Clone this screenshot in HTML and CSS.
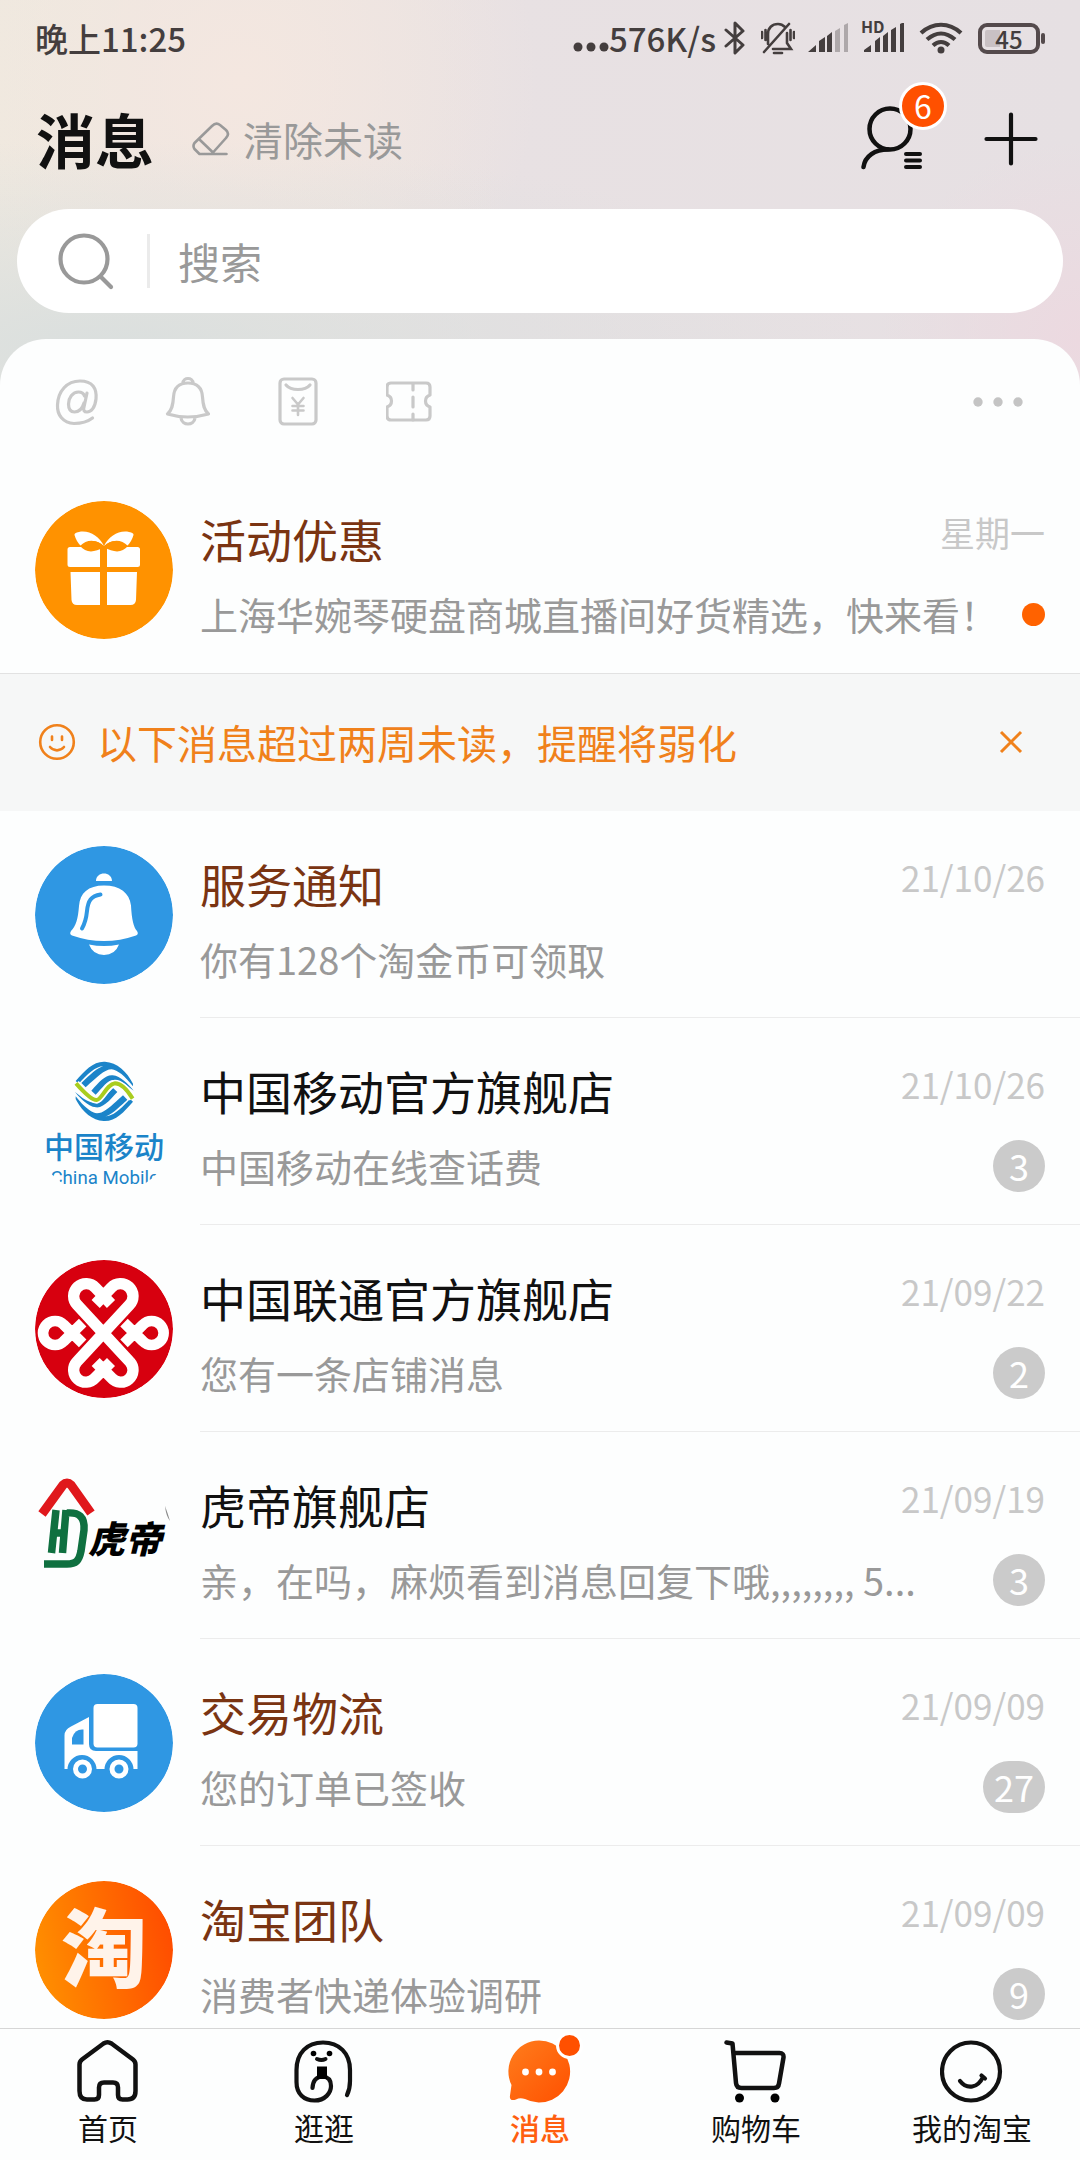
FILE: index.html
```html
<!DOCTYPE html>
<html lang="zh-CN">
<head>
<meta charset="utf-8">
<meta name="viewport" content="width=device-width, initial-scale=1">
<title>消息</title>
<link rel="stylesheet" href="styles.css">
</head>
<body>
<div class="app">
  <div class="status">
    <span class="clock">晚上11:25</span>
    <div class="status-right">
      <svg width="36" height="32" viewBox="0 0 36 32"><g fill="#443e3e"><circle cx="5" cy="25" r="4.5"/><circle cx="18" cy="25" r="4.5"/><circle cx="31" cy="25" r="4.5"/></g></svg>
      <span class="speed">576K/s</span>
      <svg class="bt" width="22" height="34" viewBox="0 0 22 34"><path d="M2 9 19 24 11 32V2l8 8L2 25" fill="none" stroke="#443e3e" stroke-width="3" stroke-linejoin="round" stroke-linecap="round"/></svg>
      <svg class="mute" width="34" height="34" viewBox="0 0 34 34"><g fill="none" stroke="#443e3e" stroke-width="2.6" stroke-linecap="round"><path d="M3 31 28 3M7 23V13c0-6 4-10 10-10 3 0 5 1 7 3M26 12v10l4 6H12M1 11v6M4.500 9v10M33 11v6M29.500 9v10"/><path d="M13 32h8"/></g></svg>
      <svg class="signal" width="42" height="30" viewBox="0 0 42 30"><g fill="#443e3e"><path d="M0 29 8 22v7zM11 18l6-4v15h-6zM19 13l5-4v20h-5z"/><g opacity=".35"><path d="M27 8l5-3v24h-5zM36 2l4-2v29h-4z"/></g></g></svg>
      <div class="hd-signal">
        <svg width="42" height="30" viewBox="0 0 42 30"><path fill="#443e3e" d="M0 29v-2l7-5v7zM11 18l5-4v15h-5zM19 13l5-4v20h-5zM27 7l5-3v25h-5zM36 1l4-2v30h-4z"/></svg>
        <span class="hd">HD</span>
      </div>
      <svg class="wifi" width="44" height="32" viewBox="0 0 44 32"><g fill="none" stroke="#443e3e" stroke-width="4.200"><path d="M2 11c12-11 28-11 40 0M8 17.500c9-8 19-8 28 0M14 23.500c5-4.500 11-4.500 16 0"/></g><circle cx="22" cy="28" r="3.500" fill="#443e3e"/></svg>
      <div class="battery"><span>45</span></div>
    </div>
  </div>

  <header class="header">
    <h1>消息</h1>
    <button class="clear" type="button">
      <svg width="38" height="36" viewBox="0 0 38 36"><g fill="none" stroke="#999" stroke-width="2.600" stroke-linecap="round" stroke-linejoin="round"><path d="M2.500 22 20 5q4-4 8-1l6 5q4 4 0 8L21 31.500 8 19M2.500 22q-2 3 0 6l5 5h27"/></g></svg>
      清除未读
    </button>
    <div class="actions">
      <button class="contacts" type="button" aria-label="通讯录">
        <svg width="62" height="66" viewBox="0 0 62 66"><g fill="none" stroke="#111" stroke-width="4.500" stroke-linecap="round"><circle cx="29" cy="23" r="20.500"/><path d="M2.500 61C4 50 14 43.500 27 43.500"/></g><path d="M45 48h14M45 54.500h14M45 61h14" stroke="#111" stroke-width="4" stroke-linecap="round"/></svg>
        <span class="count">6</span>
      </button>
      <button type="button" aria-label="添加">
        <svg width="54" height="54" viewBox="0 0 54 54"><path d="M27 2.500v49M2.500 27h49" stroke="#111" stroke-width="4.200" stroke-linecap="round"/></svg>
      </button>
    </div>
  </header>

  <form class="search">
    <svg width="58" height="58" viewBox="0 0 58 58"><g fill="none" stroke="#999" stroke-width="4.200" stroke-linecap="round"><circle cx="27" cy="27" r="23.500"/><path d="M44 45 54 55"/></g></svg>
    <input type="search" placeholder="搜索" aria-label="搜索">
  </form>

  <main class="panel">
    <div class="filters">
      <button type="button" aria-label="@我"><svg width="48" height="52" viewBox="0 0 48 52"><g fill="none" stroke="#c9c9c9" stroke-width="3.200" stroke-linecap="round" stroke-linejoin="round"><path d="M39.500 42C33 47 27 47.500 21 47.500 10 47 4 39 4.500 29 5 15 14 5 27 5s17 8 16 18c-1 9-5 13-9 13-3 0-4-2-3-5l3-14M31.500 20c-1-3-3-4-6-4-6 0-10 6-10 12 0 5 2 8 6 8 5 0 8-4 9.500-9"/></g></svg></button>
      <button type="button" aria-label="通知"><svg width="48" height="52" viewBox="0 0 48 52"><g fill="none" stroke="#c9c9c9" stroke-width="3.200" stroke-linecap="round" stroke-linejoin="round"><path d="M24 7C15 7 10 12 9.500 21 9 29 8 34 3.500 38q20 6 41 0C40 34 39 29 38.500 21 38 12 33 7 24 7zM19 7c0-6 10-6 10 0M17 42c1 8 13 8 14 0"/></g></svg></button>
      <button type="button" aria-label="红包"><svg width="48" height="52" viewBox="0 0 48 52"><g fill="none" stroke="#c9c9c9" stroke-width="3.200" stroke-linecap="round" stroke-linejoin="round"><rect x="5" y="3" width="36" height="45" rx="4"/><path d="M11 9c5 6 19 6 24 0"/><path d="M17.500 22 23 28.500 28.500 22M23 28.500V39M17.500 30h11M17.500 34.500h11" stroke-width="2.600"/></g></svg></button>
      <button type="button" aria-label="优惠券"><svg width="48" height="52" viewBox="0 0 48 52"><g fill="none" stroke="#c9c9c9" stroke-width="3.200" stroke-linecap="round" stroke-linejoin="round"><path d="M5 7h35q4 0 4 4v8c-6 2-6 10 0 12v9q0 4-4 4H5q-4 0-4-4v-9c6-2 6-10 0-12v-8q0-4 4-4z"/><path d="M27 8v6M27 21v10M27 38v6"/></g></svg></button>
      <button class="more" type="button" aria-label="更多"><svg width="52" height="12" viewBox="0 0 52 12"><g fill="#c4c4c4"><circle cx="6" cy="6" r="4.700"/><circle cx="26" cy="6" r="4.700"/><circle cx="46" cy="6" r="4.700"/></g></svg></button>
    </div>

    <ul class="list">
      <li class="row">
        <svg class="avatar" viewBox="0 0 138 138"><circle cx="69" cy="69" r="69" fill="#ff9200"/><g fill="#fff"><path d="M35 46h30v20H35q-2.500 0-2.500-2.500v-15q0-2.500 2.500-2.500zM72 46h30.500q2.500 0 2.500 2.500v15q0 2.500-2.500 2.500H72zM35.500 71H65v33H42q-5 0-5.500-5zM72 71h30l-1 28q-.5 5-5.500 5H72z"/><path d="M69 45C64 35 54 29 44 31q-5 1-4.500 3 2 7 6.500 11 12-10 23 0zM69 45c5-10 15-16 25-14q5 1 4.500 3-2 7-6.500 11-12-10-23 0z"/></g><path d="M69 46c-10 6-18 6-24-1 7-7 17-7 24 1zM69 46c10 6 18 6 24-1-7-7-17-7-24 1z" fill="#ff9200"/></svg>
        <div class="body">
          <div class="line"><h2 class="official">活动优惠</h2><time>星期一</time></div>
          <div class="line"><p>上海华婉琴硬盘商城直播间好货精选，快来看！</p><span class="dot"></span></div>
        </div>
      </li>
    </ul>

    <div class="notice">
      <svg width="38" height="38" viewBox="0 0 38 38"><g fill="none" stroke="#f0811b" stroke-width="2.600" stroke-linecap="round"><circle cx="19" cy="19" r="16.800"/><path d="M14 13.500v3.500M24 13.500v3.500M12 24c4 4.500 10 4.500 14 0"/></g></svg>
      <span>以下消息超过两周未读，提醒将弱化</span>
      <button type="button" aria-label="关闭"><svg width="24" height="24" viewBox="0 0 24 24"><path d="M2 2 22 22M22 2 2 22" stroke="#f0811b" stroke-width="3"/></svg></button>
    </div>

    <ul class="list">
      <li class="row">
        <svg class="avatar" viewBox="0 0 138 138"><circle cx="69" cy="69" r="69" fill="#2f97e3"/><g fill="#fff"><path d="M61 35c0-10 16-10 16 0zM54 98.500q15 3 30 0-4 10.500-15 10.500T54 98.500z"/><path d="M69 39.500C53 39.500 45 47 44 60 43 73 41 80 36 85q-2 3 1 4.500 32 11 64 0 3-1.500 1-4.500-5-5-6-25.500C94.500 47 85 39.500 69 39.500z"/></g><path d="M65.500 48.500C56 50 53 55 52 65s-3 14-5 17.500" fill="none" stroke="#2f97e3" stroke-width="4" stroke-linecap="round"/></svg>
        <div class="body">
          <div class="line"><h2 class="official">服务通知</h2><time>21/10/26</time></div>
          <div class="line"><p>你有128个淘金币可领取</p></div>
        </div>
      </li>
      <li class="row">
        <svg class="avatar lettered" viewBox="15 6 414 414"><defs><clipPath id="disc"><circle cx="222" cy="213" r="222"/></clipPath><g id="wave"><path fill="#1b84c9" d="M137 90C165 58 190 30 225 32c36 2 66 30 84 66v8C285 76 262 56 245 55c-22 0-44 24-78 54l-13-13c28-26 48-46 66-50-24 0-48 24-74 52z"/><path fill="#1b84c9" d="M184 119c24-26 42-48 64-46 24 2 46 26 63 46-22-18-42-34-62-32-18 2-30 22-52 44z"/></g><path id="stream" d="M138 97C160 122 185 148 200 147c16-2 30-48 55-50 20 0 38 22 53 46" fill="none"/></defs><use href="#wave"/><use href="#wave" transform="rotate(180 223 121)"/><use href="#stream" stroke="#fff" stroke-width="22"/><use href="#stream" stroke="#a9cd1e" stroke-width="12"/><g fill="#1b84c9"><text class="cm-cn" x="222" y="320" text-anchor="middle">中国移动</text><g clip-path="url(#disc)"><text class="cm-en" x="224" y="398" text-anchor="middle">China Mobile</text></g></g></svg>
        <div class="body">
          <div class="line"><h2>中国移动官方旗舰店</h2><time>21/10/26</time></div>
          <div class="line"><p>中国移动在线查话费</p><span class="badge">3</span></div>
        </div>
      </li>
      <li class="row">
        <svg class="avatar" viewBox="15 12 414 414"><circle cx="222" cy="219" r="207" fill="#d7000f"/><g fill="none" stroke="#fff" stroke-width="32"><path d="M158 262 101 206A36 36 0 1 0 101 256L158 200M282 262 339 206A36 36 0 1 1 339 256L282 200"/></g><g fill="none"><path stroke="#d7000f" stroke-width="44" d="M160 166 280 296M280 166 160 296"/><g stroke="#fff" stroke-width="34" stroke-linejoin="round"><path d="M300 318A36 36 0 0 1 245 366L197 318M140 318 299 146A36 36 0 1 0 244 95L197 144M300 318 141 146A36 36 0 1 1 196 95L243 144M140 318A36 36 0 0 0 195 366L243 318"/></g></g></svg>
        <div class="body">
          <div class="line"><h2>中国联通官方旗舰店</h2><time>21/09/22</time></div>
          <div class="line"><p>您有一条店铺消息</p><span class="badge">2</span></div>
        </div>
      </li>
      <li class="row">
        <svg class="avatar lettered" viewBox="0 0 138 138"><g fill="none" stroke="#0f7040" stroke-width="7.500"><path d="M21 43 16.500 86M31 43 27.500 86M18 66h11M32 46c12-1 18 4 17 17l-3 21c-2 10-5 13-14 13H9"/></g><path d="M7 47 28 18q4-4 8 0L56 46" fill="none" stroke="#e0181c" stroke-width="9"/><text class="hd-cn" x="53" y="86">虎帝</text><path d="M130 39q3 8 5 15-4-5-5-15z" fill="#888"/></svg>
        <div class="body">
          <div class="line"><h2>虎帝旗舰店</h2><time>21/09/19</time></div>
          <div class="line"><p>亲，在吗，麻烦看到消息回复下哦,,,,,,,, 5...</p><span class="badge">3</span></div>
        </div>
      </li>
      <li class="row">
        <svg class="avatar" viewBox="0 0 138 138"><circle cx="69" cy="69" r="69" fill="#2f97e3"/><g fill="#fff"><rect x="58.500" y="30" width="44" height="43.500" rx="4"/><path d="M54 43 36 52.500q-6.500 3-6.500 9V95h73V77H61q-7 0-7-7z"/></g><path d="M48.500 55.500v15H37V64q1-4 4-6.500 3-2.500 7.500-2z" fill="#2f97e3"/><g fill="#2f97e3"><path d="M32.500 95.500a14.500 14.500 0 0 1 29 0zM69.500 95.500a14.500 14.500 0 0 1 29 0z"/></g><g fill="#2f97e3" stroke="#fff" stroke-width="5"><circle cx="47.500" cy="95" r="7"/><circle cx="84" cy="95" r="7"/></g></svg>
        <div class="body">
          <div class="line"><h2 class="official">交易物流</h2><time>21/09/09</time></div>
          <div class="line"><p>您的订单已签收</p><span class="badge">27</span></div>
        </div>
      </li>
      <li class="row">
        <svg class="avatar" viewBox="0 0 138 138"><defs><linearGradient id="tb" x1="0" y1=".6" x2="1" y2=".4"><stop offset="0" stop-color="#ff8f00"/><stop offset="1" stop-color="#ff4d00"/></linearGradient></defs><circle cx="69" cy="69" r="69" fill="url(#tb)"/><text class="tb-cn" x="69" y="100" text-anchor="middle">淘</text></svg>
        <div class="body">
          <div class="line"><h2 class="official">淘宝团队</h2><time>21/09/09</time></div>
          <div class="line"><p>消费者快递体验调研</p><span class="badge">9</span></div>
        </div>
      </li>
    </ul>
  </main>

  <nav class="tabs">
    <a href="#home"><svg width="64" height="64" viewBox="0 0 64 64"><path d="M27.500 4.500q4-2.500 8 0L57 20.500q2.500 2 2.500 5V52q0 8.500-8 8.500h-5q-4.500 0-4.500-4.500v-7.500q0-5-5-5h-9q-5 0-5 5V56q0 4.500-4.500 4.500h-7.500q-7.500 0-7.500-8.500V25.500q0-3 2.500-5z" fill="none" stroke="#111" stroke-width="4.500"/></svg>首页</a>
    <a href="#explore"><svg width="64" height="64" viewBox="0 0 64 64"><path d="M55 56q3-6 3-14V31C58 14 47 3.500 31 3.500S4.500 14 4.500 31v12C4.500 55 12 61.500 22.500 61.500 33 61.500 39 54 39 47q0-9-8.500-9.500Q21 38 20.500 49" fill="none" stroke="#111" stroke-width="4.200" stroke-linecap="round"/><path d="M25 27.500h10V40H25z"/><circle cx="21.500" cy="14.500" r="2.800"/><circle cx="37.500" cy="14.500" r="2.800"/><path d="M25 20q4.500 2 8.500 0" fill="none" stroke="#111" stroke-width="4" stroke-linecap="round"/></svg>逛逛</a>
    <a class="active" href="#messages" aria-current="page"><svg width="64" height="64" viewBox="0 0 64 64"><defs><linearGradient id="msg" x1="0" y1="0" x2="1" y2="1"><stop offset="0" stop-color="#ff7d1c"/><stop offset="1" stop-color="#ff5000"/></linearGradient></defs><path d="M31 1.500a31 31 0 1 1-14 58.600q-5-2-9 .4-7 2-6-4l1.500-10.500A31 31 0 0 1 31 1.500z" fill="url(#msg)"/><g fill="#fff"><circle cx="17.500" cy="33" r="3.400"/><circle cx="31" cy="33" r="3.400"/><circle cx="44.500" cy="33" r="3.400"/></g></svg><span class="new"></span>消息</a>
    <a href="#cart"><svg width="64" height="64" viewBox="0 0 64 64"><g fill="none" stroke="#111" stroke-width="4.500" stroke-linecap="round" stroke-linejoin="round"><path d="M2.500 3.500 8.500 4.500 12 44q.5 5 5.500 5H50q4.500 0 5-4.500l4.500-26q.5-4.500-4-4.500H9.500"/></g><circle cx="15.500" cy="59" r="4.500"/><circle cx="51" cy="59" r="4.500"/></svg>购物车</a>
    <a href="#mine"><svg width="64" height="64" viewBox="0 0 64 64"><g fill="none" stroke="#111" stroke-width="4.200" stroke-linecap="round"><circle cx="31" cy="32.500" r="29"/><path d="M20 42c7 9 18 7 23-4M41.500 36.500l3.500 3"/></g></svg>我的淘宝</a>
  </nav>
</div>
</body>
</html>
```

FILE: styles.css
```css
* {
  box-sizing: border-box;
}

body {
  margin: 0;
  font-family: "Noto Sans CJK SC", sans-serif;
  color: #111;
}

h1,
h2,
p,
ul {
  margin: 0;
  padding: 0;
}

button {
  display: flex;
  align-items: center;
  padding: 0;
  border: 0;
  background: none;
  font: inherit;
  color: inherit;
}

svg {
  display: block;
  flex: none;
}

.app {
  display: flex;
  flex-direction: column;
  height: 100vh;
  background:
    radial-gradient(circle at 100% 340px, #ecd9e0 0, rgba(236, 217, 224, 0) 200px),
    radial-gradient(ellipse 760px 210px at 10% 350px, #dadfde 0, rgba(220, 224, 225, 0) 100%),
    radial-gradient(circle at 240px 80px, #f4e7e0 0, rgba(244, 231, 224, 0) 300px),
    linear-gradient(90deg, #efe9df 0, #e8e1e3 500px, #e6e0e3 100%);
}

/* status bar */
.status {
  display: flex;
  align-items: center;
  justify-content: space-between;
  height: 76px;
  padding: 0 40px 0 35px;
  color: #443e3e;
}

.clock,
.speed {
  font-size: 33px;
  font-weight: 500;
  line-height: 40px;
}

.status-right {
  display: flex;
  align-items: center;
}

.bt {
  margin-left: 8px;
}

.mute {
  margin-left: 15px;
}

.signal {
  margin-left: 13px;
}

.hd-signal {
  position: relative;
  margin-left: 14px;
}

.hd {
  position: absolute;
  top: -5px;
  left: -3px;
  font-size: 16px;
  font-weight: 700;
  line-height: 16px;
}

.wifi {
  margin-left: 13px;
}

.battery {
  position: relative;
  width: 62px;
  height: 31px;
  margin-left: 15px;
  padding: 3px;
  border: 4px solid #544a4c;
  border-radius: 9px;
  background: linear-gradient(90deg, #c9c1c4 15px, transparent 15px) content-box;
  font-size: 24px;
  font-weight: 500;
  line-height: 17px;
  text-align: center;
}

.battery::after {
  content: "";
  position: absolute;
  top: 6px;
  right: -9px;
  width: 4px;
  height: 11px;
  border-radius: 2px;
  background: #544a4c;
}

/* title row */
.header {
  display: flex;
  align-items: center;
  height: 128px;
  padding: 0 42px 2px 36px;
}

.header h1 {
  font-size: 59px;
  font-weight: 700;
  line-height: 80px;
}

.clear {
  gap: 13px;
  margin-left: 38px;
  font-size: 40px;
  line-height: 60px;
  color: #999;
}

.actions {
  display: flex;
  align-items: center;
  gap: 61px;
  margin-left: auto;
}

.contacts {
  position: relative;
}

.count {
  position: absolute;
  top: -24px;
  left: 38px;
  width: 48px;
  height: 48px;
  border: 3px solid #fff;
  border-radius: 50%;
  background: #ff5000;
  color: #fff;
  font-size: 32px;
  line-height: 41px;
  text-align: center;
}

/* search field */
.search {
  display: flex;
  align-items: center;
  flex: none;
  height: 104px;
  margin: 5px 17px 26px;
  padding: 0 40px;
  border-radius: 52px;
  background: #fff;
}

.search input {
  flex: 1;
  min-width: 0;
  height: 54px;
  margin-left: 32px;
  padding: 0 0 0 28px;
  border: 0;
  border-left: 3px solid #ebebeb;
  background: none;
  outline: none;
  font: 42px/54px "Noto Sans CJK SC", sans-serif;
}

.search input::placeholder {
  color: #999;
  opacity: 1;
}

/* message panel */
.panel {
  flex: 1;
  min-height: 0;
  overflow-y: auto;
  scrollbar-width: none;
  border-radius: 46px 46px 0 0;
  background: #fdfefe;
}

.filters {
  display: flex;
  align-items: center;
  gap: 63px;
  height: 127px;
  padding: 0 56px 2px 53px;
}

.more {
  margin-left: auto;
}

.list {
  list-style: none;
}

.row {
  display: flex;
  gap: 27px;
  height: 207px;
  padding: 35px 0 0 35px;
}

.avatar {
  width: 138px;
  height: 138px;
  border-radius: 50%;
}

.avatar.lettered {
  border-radius: 0;
}

.body {
  flex: 1;
  min-width: 0;
  display: flex;
  flex-direction: column;
  gap: 19px;
  padding: 7px 35px 0 0;
  border-bottom: 1px solid #ececec;
}

.row:last-child .body {
  border-bottom: 0;
}

.line {
  display: flex;
  align-items: center;
  justify-content: space-between;
  gap: 20px;
}

.line h2 {
  font-size: 46px;
  font-weight: 400;
  line-height: 60px;
}

.official {
  color: #7a3412;
}

.line time {
  align-self: flex-start;
  font-size: 35px;
  line-height: 48px;
  color: #c8c8c8;
}

.line p {
  min-width: 0;
  overflow: hidden;
  font-size: 38px;
  line-height: 54px;
  white-space: nowrap;
  color: #999;
}

.dot {
  flex: none;
  width: 23px;
  height: 23px;
  border-radius: 50%;
  background: #ff6200;
}

.badge {
  flex: none;
  min-width: 52px;
  height: 52px;
  padding: 0 11px;
  border-radius: 26px;
  background: #cbcbcb;
  color: #fff;
  font-size: 36px;
  line-height: 50px;
  text-align: center;
}

.notice {
  display: flex;
  align-items: center;
  gap: 21px;
  height: 138px;
  padding: 0 57px 2px 38px;
  border-top: 1px solid #e2e2e2;
  background: #f6f7f7;
  font-size: 40px;
  line-height: 60px;
  color: #f0811b;
}

.notice button {
  margin-left: auto;
}

/* lettering inside avatars */
.cm-cn {
  font-size: 90px;
  font-weight: 500;
}

.cm-en {
  font: 56px Roboto, sans-serif;
}

.hd-cn {
  font-size: 37px;
  font-style: italic;
  font-weight: 900;
}

.tb-cn {
  font-size: 86px;
  font-weight: 900;
  fill: #fff3ea;
}

/* bottom tab bar */
.tabs {
  display: grid;
  grid-template-columns: repeat(5, 1fr);
  flex: none;
  height: 132px;
  border-top: 1px solid #d6d6d6;
  background: #fdfefe;
}

.tabs a {
  position: relative;
  display: flex;
  flex-direction: column;
  align-items: center;
  gap: 4px;
  padding-top: 10px;
  font-size: 30px;
  line-height: 40px;
  color: #111;
  text-decoration: none;
}

.tabs .active {
  color: #ff5f10;
  font-weight: 500;
}

.new {
  position: absolute;
  top: 3px;
  left: calc(50% + 16px);
  width: 27px;
  height: 27px;
  border: 3px solid #fff;
  border-radius: 50%;
  background: #ff5000;
}
```
